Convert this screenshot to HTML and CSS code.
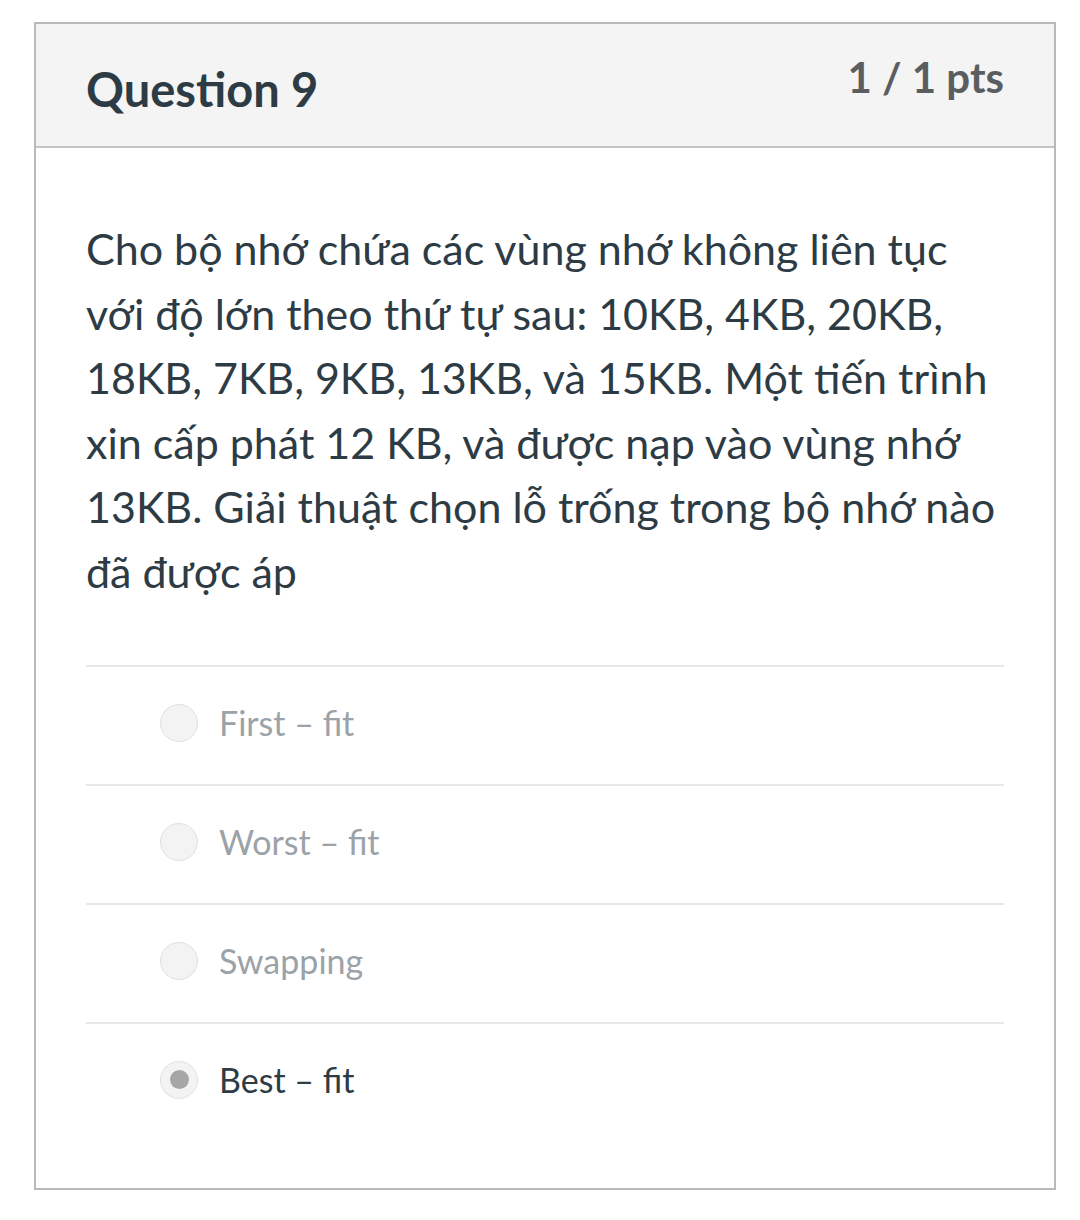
FILE: index.html
```html
<!DOCTYPE html>
<html lang="vi">
<head>
<meta charset="utf-8">
<link rel="stylesheet" href="styles.css">
</head>
<body>
<div class="card">
  <div class="card-header">
    <h2 class="q-title">Question 9</h2>
    <div class="q-pts">1 / 1 pts</div>
  </div>
  <div class="card-body">
    <p class="q-text">Cho bộ nhớ chứa các vùng nhớ không liên tục với độ lớn theo thứ tự sau: 10KB, 4KB, 20KB, 18KB, 7KB, 9KB, 13KB, và 15KB. Một tiến trình xin cấp phát 12 KB, và được nạp vào vùng nhớ 13KB. Giải thuật chọn lỗ trống trong bộ nhớ nào đã được áp</p>
    <ul class="answers">
      <li class="answer"><span class="radio"></span><span class="label">First – fit</span></li>
      <li class="answer"><span class="radio"></span><span class="label">Worst – fit</span></li>
      <li class="answer"><span class="radio"></span><span class="label">Swapping</span></li>
      <li class="answer selected"><span class="radio"></span><span class="label">Best – fit</span></li>
    </ul>
  </div>
</div>
</body>
</html>
```
FILE: styles.css
```css
html, body {
  margin: 0;
  padding: 0;
  background: #ffffff;
}
body {
  font-family: Lato, "Noto Sans", sans-serif;
  color: #2d3b45;
  padding: 22px 24px 0 34px;
}
.card {
  width: 1018px;
  border: 2px solid #b9b9b9;
  box-sizing: content-box;
}
.card-header {
  background: #f4f4f4;
  border-bottom: 2px solid #c4c4c4;
  height: 122px;
  display: flex;
  justify-content: space-between;
  align-items: flex-start;
  padding: 0 50px 0 50px;
}
.q-title {
  margin: 36px 0 0 0;
  font-size: 47px;
  font-weight: 700;
  line-height: 58px;
  color: #2d3b45;
}
.q-pts {
  margin-top: 28px;
  font-size: 42px;
  font-weight: 700;
  line-height: 50px;
  color: #5b5e61;
}
.card-body {
  padding: 69px 50px 47px 50px;
}
.q-text {
  margin: 0;
  font-size: 43px;
  line-height: 64.5px;
  color: #2d3b45;
}
.answers {
  list-style: none;
  margin: 61px 0 0 0;
  padding: 0;
}
.answer {
  box-sizing: border-box;
  border-top: 2px solid #e8e8e8;
  height: 119px;
  padding-bottom: 6px;
  display: flex;
  align-items: center;
  padding-left: 74px;
}
.radio {
  width: 36px;
  height: 36px;
  border-radius: 50%;
  border: 1px solid #e0e0e0;
  background: #f3f3f3;
  display: flex;
  align-items: center;
  justify-content: center;
  flex: none;
}
.selected .radio::after {
  content: "";
  width: 19px;
  height: 19px;
  border-radius: 50%;
  background: #a6a6a6;
}
.label {
  margin-left: 21px;
  font-size: 34px;
  color: #9ba2a8;
}
.selected .label {
  color: #2d3b45;
}
```
